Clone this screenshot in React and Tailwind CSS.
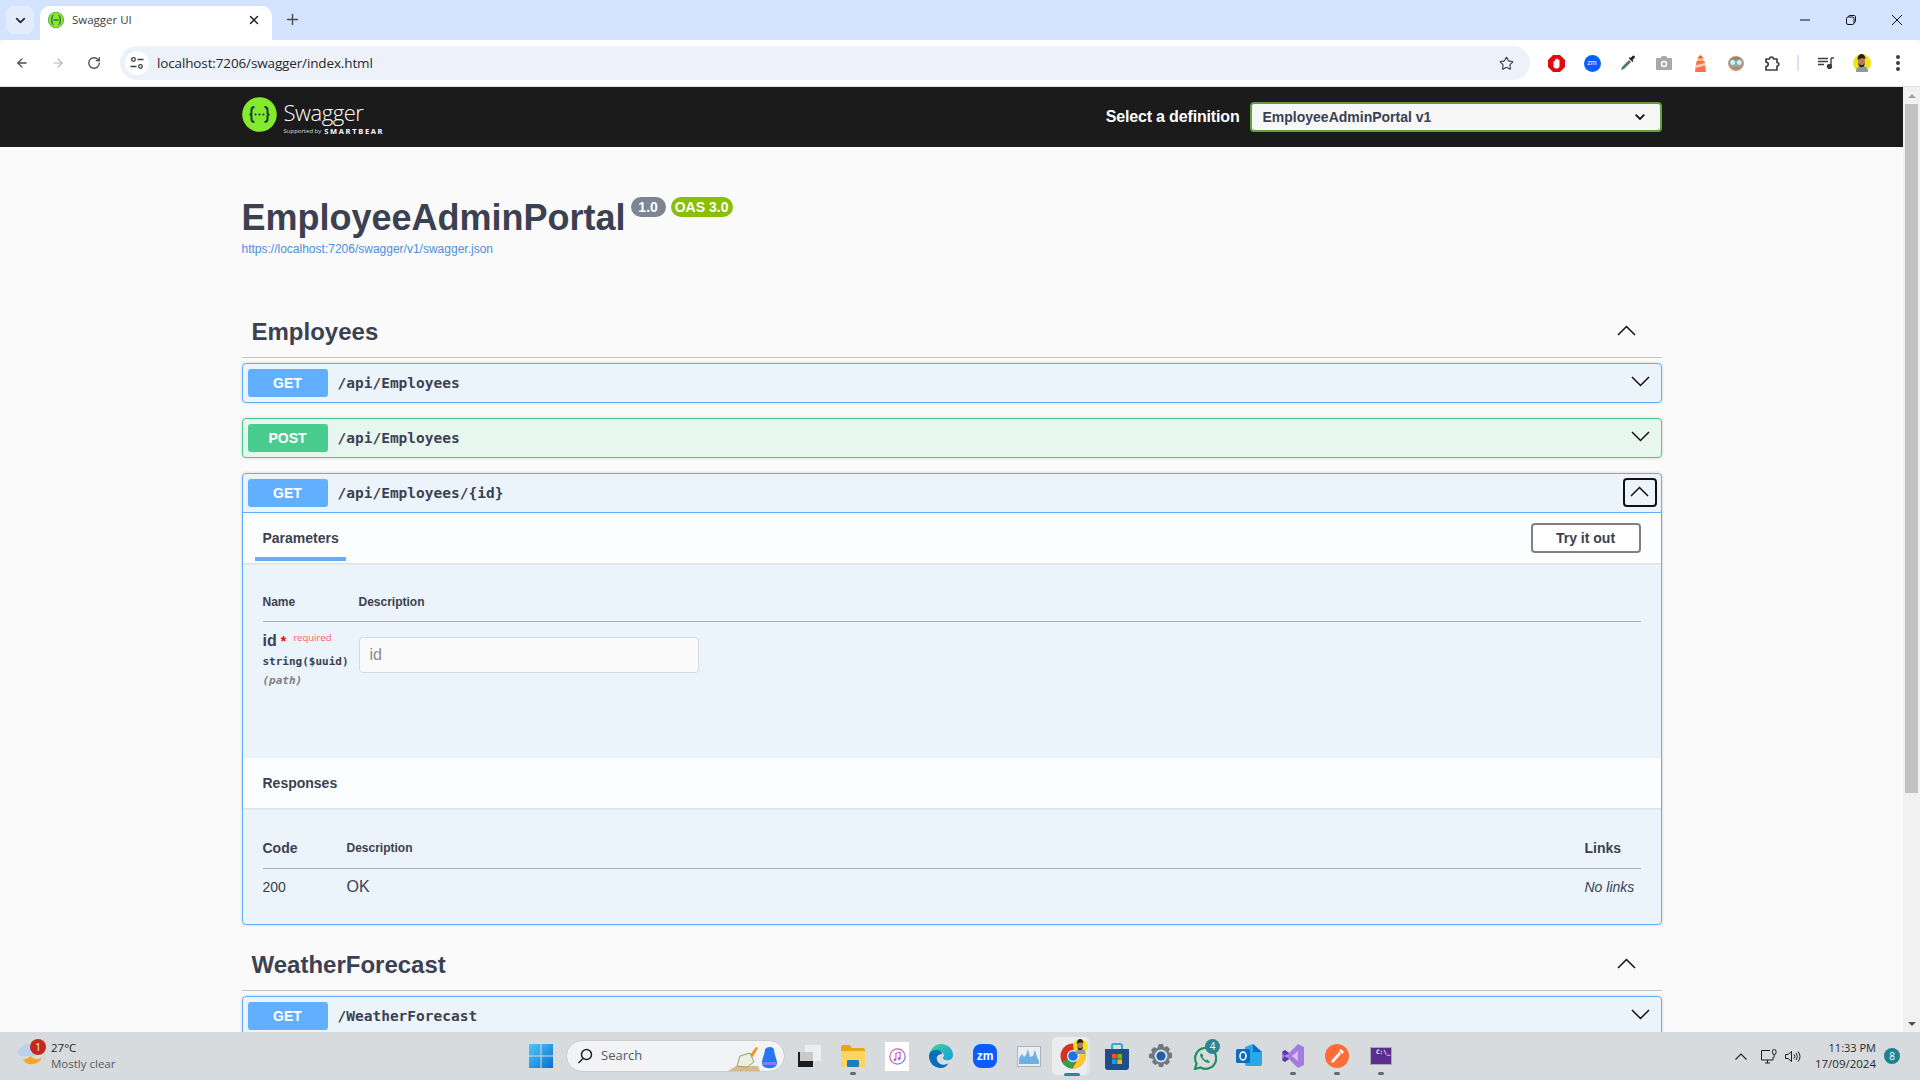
import React from "react";
import { ArrowLeft, ArrowRight, RotateCw, Star, X, Plus, ChevronDown } from "lucide-react";

const Chev = ({ up, className = "" }) => (
  <svg width="19" height="11" viewBox="0 0 19 11" className={className} fill="none" stroke="#111" strokeWidth="1.5">
    <path d={up ? "M1 10 L9.5 1.5 L18 10" : "M1 1 L9.5 9.5 L18 1"} />
  </svg>
);

const Method = ({ m, color }) => (
  <span className={`w-[80px] h-[28px] rounded-[3px] text-white font-bold text-[14px] flex items-center justify-center shrink-0 ${color}`}>{m}</span>
);

const Path = ({ children }) => (
  <span className="ml-[10px] mt-[2px] text-[14.5px] font-bold text-[#3b4151] font-['DejaVu_Sans_Mono',monospace]">{children}</span>
);

const Row = ({ m, path, post, className = "" }) => (
  <div className={`h-[40px] rounded-[4px] border flex items-center pl-[5px] pr-[11px] shadow-[0_0_3px_rgba(0,0,0,0.19)] ${post ? "bg-[#e8f6f0] border-[#49cc90]" : "bg-[#ebf3fb] border-[#61affe]"} ${className}`}>
    <Method m={m} color={post ? "bg-[#49cc90]" : "bg-[#61affe]"} />
    <Path>{path}</Path>
    <Chev className="ml-auto mb-[3px]" />
  </div>
);

const TagHead = ({ name }) => (
  <div className="h-[51px] border-b border-[#c4c4c4] flex items-center pl-[10px] pr-[26px]">
    <h3 className="text-[24px] font-bold text-[#3b4151]">{name}</h3>
    <Chev up className="ml-auto mb-[3px]" />
  </div>
);

const Swag = ({ size = 35, className = "" }) => (
  <svg width={size} height={size} viewBox="0 0 35 35" className={`shrink-0 ${className}`}>
    <circle cx="17.5" cy="17.5" r="17.3" fill="#85ea2d" />
    <path d="M12.5 10c-2.5 0-3 1-3 3v3c0 1-.7 1.5-2 1.5 1.3 0 2 .5 2 1.5v3c0 2 .5 3 3 3M22.500 10c2.500 0 3 1 3 3v3c0 1 .7 1.500 2 1.500-1.300 0-2 .5-2 1.500v3c0 2-.5 3-3 3" fill="none" stroke="#173647" strokeWidth="2" />
    <circle cx="13.500" cy="17.500" r="1.100" fill="#173647" />
    <circle cx="17.500" cy="17.500" r="1.100" fill="#173647" />
    <circle cx="21.500" cy="17.500" r="1.100" fill="#173647" />
  </svg>
);

const Avatar = ({ size = 18 }) => (
  <svg width={size} height={size} viewBox="0 0 18 18" className="shrink-0">
    <circle cx="9" cy="9" r="9" fill="#f2e21a" />
    <path d="M3 18c0-5 3-6 6-6s6 1 6 6z" fill="#8d98a3" />
    <ellipse cx="8.500" cy="7.500" rx="3.500" ry="4.500" fill="#b67c55" />
    <path d="M4.500 6c0-4 2-6 4-6s4 2 4 5c-2-1-5-1-8 1zM5.500 9c1 3 5 3 6 0v2c-1 3-5 3-6 0z" fill="#23211f" />
  </svg>
);

const Ext = ({ children }) => <div className="w-[36px] flex items-center justify-center">{children}</div>;

const Dot = () => <span className="absolute bottom-[5px] left-1/2 -translate-x-1/2 w-[6px] h-[3px] rounded-full bg-[#666b70]" />;

const App24 = ({ children, dot }) => (
  <div className="relative w-[44px] h-[48px] flex items-center justify-center shrink-0">
    {children}
    {dot && <Dot />}
  </div>
);

export default function App() {
  return (
    <div className="w-[1920px] h-[1080px] flex flex-col overflow-hidden font-['Liberation_Sans',Arial,sans-serif] bg-[#fafafa]">
      {/* tab strip */}
      <div className="h-[40px] shrink-0 bg-[#d3e3fd] flex items-end relative">
        <div className="absolute left-[6px] top-[6px] w-[28px] h-[28px] rounded-[8px] bg-[#e3ecfb] flex items-center justify-center">
          <ChevronDown size={15} strokeWidth={3} color="#2a2f36" />
        </div>
        <div className="ml-[40px] w-[232px] h-[34px] bg-white rounded-t-[10px] flex items-center pl-[8px] pr-[9px] pb-[6px]">
          <svg width="16" height="16" viewBox="0 0 16 16" className="shrink-0">
            <circle cx="8" cy="8" r="7.700" fill="#85ea2d" stroke="#2f7a3a" strokeWidth="0.6" />
            <path d="M5.500 3.500C4 3.500 4 5 4 6.500S3.500 8 3 8c.5 0 1 .5 1 1.500s0 3 1.500 3M10.500 3.500c1.500 0 1.500 1.500 1.500 3s.5 1.500 1 1.500c-.5 0-1 .5-1 1.500s0 3-1.500 3M5.500 8h5" fill="none" stroke="#173647" strokeWidth="1" />
          </svg>
          <span className="ml-[8px] text-[11.500px] text-[#3c4043] font-['Open_Sans',sans-serif]">Swagger UI</span>
          <X size={14} strokeWidth={2.5} color="#202124" className="ml-auto mr-[2px]" />
        </div>
        <Plus size={17} strokeWidth={2} color="#45494f" className="ml-[12px] mb-[12px]" />
        <div className="ml-auto flex items-center mb-[15px] pr-[18px] gap-[36px]">
          <svg width="10" height="10" viewBox="0 0 10 10"><path d="M0 5h10" stroke="#111" strokeWidth="1" /></svg>
          <svg width="10" height="10" viewBox="0 0 10 10" fill="none" stroke="#111" strokeWidth="1"><rect x="0.500" y="2" width="7.500" height="7.500" rx="1.500" /><path d="M2.500 2V1.500C2.500 1 3 .5 3.500 .5h4.500C9 .5 9.500 1 9.500 2v4.500C9.500 7 9 7.500 8 7.500" /></svg>
          <svg width="10" height="10" viewBox="0 0 10 10"><path d="M0 0l10 10M10 0L0 10" stroke="#111" strokeWidth="1" /></svg>
        </div>
      </div>

      {/* toolbar */}
      <div className="h-[47px] shrink-0 bg-white border-b border-[#e3e3e3] flex items-center rounded-t-[10px]">
        <div className="w-[120px] pl-[15px] flex items-center gap-[22px] shrink-0">
          <ArrowLeft size={14} strokeWidth={2.2} color="#474b50" className="w-[14px]" />
          <ArrowRight size={14} strokeWidth={2} color="#b0b2b5" />
          <RotateCw size={14} strokeWidth={2.2} color="#474b50" />
        </div>
        <div className="w-[1410px] h-[34px] bg-[#edf2fa] rounded-full flex items-center pl-[5px] pr-[16px] shrink-0">
          <div className="w-[24px] h-[24px] rounded-full bg-white flex items-center justify-center">
            <svg width="14" height="14" viewBox="0 0 14 14" fill="none" stroke="#3c4043" strokeWidth="1.300">
              <circle cx="3.500" cy="3.500" r="1.800" /><path d="M7.500 3.500h6M0.500 10.500h6" /><circle cx="10.500" cy="10.500" r="1.800" />
            </svg>
          </div>
          <span className="ml-[8px] text-[13.5px] text-[#25282c] font-['Open_Sans',sans-serif] tracking-[-0.01em]">localhost:7206/swagger/index.html</span>
          <Star size={15} strokeWidth={1.8} color="#3c4043" className="ml-auto" />
        </div>
        <div className="ml-[8px] flex items-center">
          <Ext>
            <svg width="17" height="17" viewBox="0 0 17 17"><path d="M5 0h7l5 5v7l-5 5H5l-5-5V5z" fill="#e5090f" /><path d="M5.500 11V6.500a.8.800 0 0 1 1.500 0V4.500a.8.800 0 0 1 1.500 0V4a.8.800 0 0 1 1.500 0v1a.8.800 0 0 1 1.500 0v6c0 1.500-1 2.500-2.500 2.500H8C6.500 13.500 5.500 12.500 5.500 11z" fill="#fff" /></svg>
          </Ext>
          <Ext>
            <div className="w-[17px] h-[17px] rounded-full bg-[#0b5cff] text-white text-[7px] flex items-center justify-center">zm</div>
          </Ext>
          <Ext>
            <svg width="16" height="16" viewBox="0 0 16 16"><path d="M1 15l1-3 7-7 2 2-7 7z" fill="#4e7d58" /><path d="M9 3.500l3.500 3.500 1-1-1-1 2-2a1.400 1.400 0 0 0-2-2l-2 2-1-1z" fill="#202124" /></svg>
          </Ext>
          <Ext>
            <svg width="16" height="14" viewBox="0 0 16 14"><path d="M1 2h3.500L6 0h4l1.500 2H15a1 1 0 0 1 1 1v10a1 1 0 0 1-1 1H1a1 1 0 0 1-1-1V3a1 1 0 0 1 1-1z" fill="#a8a8a8" /><circle cx="8" cy="8" r="3.200" fill="#fff" /><circle cx="8" cy="8" r="1.800" fill="#a8a8a8" /></svg>
          </Ext>
          <Ext>
            <svg width="13" height="17" viewBox="0 0 13 17"><path d="M6.500 0l3 3h-6z" fill="#f4511e" /><rect x="3.500" y="3" width="6" height="3" fill="#ffab91" /><path d="M2.500 6h8L12 17H1z" fill="#ff7043" /><path d="M2 10l9-2 .4 2.500L1.600 13z" fill="#ffccbc" /></svg>
          </Ext>
          <Ext>
            <svg width="16" height="15" viewBox="0 0 16 15"><ellipse cx="8" cy="7.500" rx="8" ry="7.500" fill="#c49a76" /><path d="M2 4c2-4 10-4 12 0z" fill="#9d7f5e" /><circle cx="4.800" cy="6.500" r="3" fill="#d9eef2" stroke="#6ea6b0" /><circle cx="11.200" cy="6.500" r="3" fill="#d9eef2" stroke="#6ea6b0" /><path d="M5 12h6" stroke="#8a8f92" strokeWidth="2" /></svg>
          </Ext>
          <Ext>
            <svg width="17" height="17" viewBox="0 0 17 17" fill="none" stroke="#3c4043" strokeWidth="1.700" strokeLinejoin="round"><path d="M2 4h3.500a2 2 0 0 1 4 0H13v3.500a1.800 1.800 0 0 1 0 3.600V15H2v-3.500a2.200 2.200 0 0 0 0-4.400z" /></svg>
          </Ext>
          <div className="w-[2px] h-[16px] bg-[#d3e3fd] ml-[7px] mr-[17px]" />
          <div className="w-[20px] flex justify-center">
            <svg width="16" height="12" viewBox="0 0 16 12" fill="none" stroke="#3c4043" strokeWidth="1.400"><path d="M0 1.500h10M0 4.500h10M0 7.500h6" /><path d="M13 1v8" /><path d="M13 1h3" /><circle cx="11.500" cy="9.500" r="2" fill="#3c4043" /></svg>
          </div>
          <div className="w-[36px] ml-[8px] flex justify-center"><Avatar /></div>
          <div className="ml-[8px] w-[20px] flex flex-col items-center gap-[2.500px]">
            <span className="w-[3.500px] h-[3.500px] rounded-full bg-[#3c4043]" />
            <span className="w-[3.500px] h-[3.500px] rounded-full bg-[#3c4043]" />
            <span className="w-[3.500px] h-[3.500px] rounded-full bg-[#3c4043]" />
          </div>
        </div>
      </div>

      {/* viewport */}
      <div className="flex-1 min-h-0 flex overflow-hidden">
        <div className="flex-1 min-w-0 overflow-hidden">
          <div className="h-[60px] bg-[#1b1b1b]">
            <div className="w-[1420px] mx-auto h-full flex items-center">
              <Swag className="mb-[6px]" />
              <div className="ml-[7px] flex flex-col text-white font-['Open_Sans',sans-serif] mt-[1px]">
                <span className="text-[22px] leading-[26px] font-light tracking-[-0.02em]">Swagger</span>
                <div className="flex items-center h-[9px] mt-[2px]">
                  <span className="text-[6px] leading-[9px] whitespace-nowrap text-[#dcdcdc]">Supported by</span>
                  <span className="ml-[3px] text-[7.500px] leading-[9px] font-bold tracking-[0.22em]">SMARTBEAR</span>
                </div>
              </div>
              <span className="ml-auto text-white text-[16px] font-bold tracking-[-0.01em]">Select a definition</span>
              <div className="ml-[10px] w-[412px] h-[30px] rounded-[4px] border-2 border-[#62a03f] bg-[#f7f7f7] flex items-center pl-[11px] pr-[15px] text-[14px] font-bold text-[#3b4151]">
                EmployeeAdminPortal v1
                <svg width="10" height="6" viewBox="0 0 10 6" className="ml-auto" fill="none" stroke="#111" strokeWidth="1.800"><path d="M.7.700L5 5l4.300-4.300" /></svg>
              </div>
            </div>
          </div>

          <div className="w-[1420px] mx-auto">
            <div className="pt-[50px] flex items-start h-[94px]">
              <h2 className="mt-[1px] text-[36px] leading-[40px] font-bold text-[#3b4151]">EmployeeAdminPortal</h2>
              <span className="ml-[5px] h-[20px] w-[35px] rounded-[10px] bg-[#7d8492] text-white text-[14px] font-bold flex items-center justify-center">1.0</span>
              <span className="ml-[5px] h-[20px] w-[62px] rounded-[10px] bg-[#89bf04] text-white text-[14px] font-bold flex items-center justify-center whitespace-nowrap">OAS 3.0</span>
            </div>
            <div className="mt-[1px] h-[14px] text-[12px] leading-[14px] text-[#4990e2]">https://localhost:7206/swagger/v1/swagger.json</div>
            <div className="mt-[51px]"><TagHead name="Employees" /></div>
            <Row m="GET" path="/api/Employees" className="mt-[5px]" />
            <Row m="POST" path="/api/Employees" post className="mt-[15px]" />

            <div className="mt-[15px] rounded-[4px] border border-[#61affe] bg-[#ebf3fb] shadow-[0_0_3px_rgba(0,0,0,0.19)]">
              <div className="h-[39px] border-b border-[#61affe] flex items-center pl-[5px] pr-[4px]">
                <Method m="GET" color="bg-[#61affe]" />
                <Path>/api/Employees/{"{id}"}</Path>
                <div className="ml-auto w-[34px] h-[29px] -mt-[1px] rounded-[4px] border-2 border-[#111] flex items-center justify-center">
                  <Chev up className="mb-[3px]" />
                </div>
              </div>

              <div className="h-[50px] bg-[#fcfdfe] shadow-[0_1px_2px_rgba(0,0,0,0.1)] flex items-center pl-[12px] pr-[20px]">
                <div className="self-start w-[91px] h-[48px] border-b-4 border-[#61affe] pl-[8px] pt-[15px] text-[14px] leading-[20px] font-bold text-[#3b4151]">Parameters</div>
                <button className="ml-auto w-[110px] h-[30px] rounded-[4px] border-2 border-[#808080] bg-white text-[14px] font-bold text-[#3b4151]">Try it out</button>
              </div>

              <div className="h-[195px] px-[20px] pt-[29px]">
                <div className="h-[30px] border-b border-[#a7acb5] flex text-[12px] leading-[20px] font-bold text-[#3b4151]">
                  <div className="w-[96px]">Name</div>
                  <div>Description</div>
                </div>
                <div className="flex">
                  <div className="w-[96px] pt-[9px]">
                    <div className="h-[20px] flex items-center">
                      <span className="text-[16px] font-bold text-[#3b4151]">id</span>
                      <span className="ml-[4px] text-[#ff0000] text-[14px] font-bold">*</span>
                      <span className="ml-[7px] -mt-[6px] text-[9.500px] text-[#ff6060] font-['Open_Sans',sans-serif]">required</span>
                    </div>
                    <div className="mt-[1px] h-[20px] leading-[20px] text-[11px] font-['DejaVu_Sans_Mono',monospace] font-bold text-[#3b4151] whitespace-nowrap">string($uuid)</div>
                    <div className="h-[18px] leading-[18px] text-[11px] italic font-['DejaVu_Sans_Mono',monospace] font-bold text-[#808080]">(path)</div>
                  </div>
                  <div className="pt-[15px]">
                    <input readOnly placeholder="id" className="block w-[340px] h-[36px] rounded-[4px] border border-[#d9d9d9] bg-[#fafafa] pl-[10px] text-[16px] text-[#3b4151] placeholder:text-[#8a8a8a] outline-none" />
                  </div>
                </div>
              </div>

              <div className="h-[50px] bg-[#fcfdfe] shadow-[0_1px_2px_rgba(0,0,0,0.1)] flex items-center pl-[20px] text-[14px] font-bold text-[#3b4151]">Responses</div>

              <div className="h-[116px] px-[20px] pt-[30px]">
                <div className="h-[31px] border-b border-[#a7acb5] flex text-[#3b4151] leading-[20px]">
                  <div className="w-[84px] text-[14px] font-bold">Code</div>
                  <div className="text-[12px] font-bold">Description</div>
                  <div className="ml-auto w-[56px] text-[14px] font-bold">Links</div>
                </div>
                <div className="flex pt-[8px] text-[#3b4151] leading-[20px]">
                  <div className="w-[84px] text-[14px]">200</div>
                  <div className="text-[16px]">OK</div>
                  <div className="ml-auto w-[56px] text-[14px] italic">No links</div>
                </div>
              </div>
            </div>

            <div className="mt-[15px]"><TagHead name="WeatherForecast" /></div>
            <Row m="GET" path="/WeatherForecast" className="mt-[5px]" />
          </div>
        </div>

        {/* scrollbar */}
        <div className="w-[17px] shrink-0 bg-[#f1f1f1] flex flex-col items-center">
          <div className="h-[17px] flex items-center justify-center"><div className="w-0 h-0 border-x-[4px] border-x-transparent border-b-[4px] border-b-[#a3a3a3]" /></div>
          <div className="w-[13px] h-[689px] bg-[#c1c1c1]" />
          <div className="mt-auto h-[17px] flex items-center justify-center"><div className="w-0 h-0 border-x-[4px] border-x-transparent border-t-[4px] border-t-[#505050]" /></div>
        </div>
      </div>

      {/* taskbar */}
      <div className="h-[48px] shrink-0 bg-[#d8dbde] flex items-center">
        <div className="w-[529px] shrink-0 flex items-center pl-[18px]">
          <div className="relative w-[30px] h-[34px] shrink-0">
            <svg width="26" height="30" viewBox="0 0 26 30" className="absolute left-0 top-[3px]">
              <path d="M5 18a11 11 0 0 0 19-3c-2 3-9 3-11-1 0 0-4 3-8 4z" fill="#f6a623" />
              <path d="M2 14a5 5 0 0 1 2-9 6 6 0 0 1 11 2 3.500 3.500 0 0 1 0 7z" fill="#bcd2ec" />
            </svg>
            <span className="absolute left-[12px] top-0 w-[16px] h-[16px] rounded-full bg-[#c4281c] text-white text-[10px] leading-[16px] text-center font-['Open_Sans',sans-serif]">1</span>
          </div>
          <div className="ml-[3px] text-[11.500px] leading-[16px] font-['Open_Sans',sans-serif]">
            <div className="text-[#1f1f1f]">27°C</div>
            <div className="text-[#555a5f]">Mostly clear</div>
          </div>
        </div>

        <svg width="24" height="24" viewBox="0 0 24 24" className="shrink-0">
          <defs><linearGradient id="win" x1="0" y1="0" x2="1" y2="1"><stop offset="0" stopColor="#4fc8f8" /><stop offset="1" stopColor="#0a6fd1" /></linearGradient></defs>
          <path d="M0 0h11.500v11.500H0zM12.500 0H24v11.500H12.500zM0 12.500h11.500V24H0zM12.500 12.500H24V24H12.500z" fill="url(#win)" />
        </svg>

        <div className="ml-[13px] w-[219px] h-[32px] rounded-full bg-[#f1f3f5] border border-[#c9ccd0] flex items-center pl-[10px] shrink-0 relative">
          <svg width="16" height="16" viewBox="0 0 16 16" fill="none" stroke="#1f1f1f" strokeWidth="1.500"><circle cx="9.500" cy="6.500" r="5" /><path d="M6 10.500L1.500 15" /></svg>
          <span className="ml-[8px] text-[13px] text-[#55595e] font-['Open_Sans',sans-serif]">Search</span>
          <svg width="50" height="27" viewBox="0 0 50 27" className="absolute right-[6px] top-[3px]">
            <path d="M0 27l8-5h22l2 5z" fill="#d8b98a" />
            <path d="M9 22l3-10 10-3 4 9-7 5z" fill="#eef0df" stroke="#89a57a" />
            <path d="M22 11l6-8 2 1-5 9z" fill="#f39323" />
            <path d="M35 22a5 5 0 0 1-1-3c0-5 2-6 3-13 0-2 3-3 5-3 2 0 4 1 4 3 1 7 3 9 3 13a5 5 0 0 1-1 3c-3 3-10 3-13 0z" fill="#2876f0" />
            <path d="M35 18h13v3H35z" fill="#8a7bf0" />
          </svg>
        </div>

        <div className="flex ml-[2px] items-center">
          <App24>
            <div className="relative w-[23px] h-[22px]">
              <div className="absolute left-[7px] top-0 w-[16px] h-[16px] bg-[#eceeef]" />
              <div className="absolute left-0 top-[7px] w-[15px] h-[15px] bg-[#1c1c1c]" />
              <div className="absolute left-[2px] top-[7px] w-[13px] h-[9px] bg-[#c9c9c9]" />
            </div>
          </App24>
          <App24 dot>
            <svg width="24" height="22" viewBox="0 0 24 22"><path d="M0 2a2 2 0 0 1 2-2h7l2 3h11a2 2 0 0 1 2 2v15a2 2 0 0 1-2 2H2a2 2 0 0 1-2-2z" fill="#e8a817" /><path d="M0 6h24v14a2 2 0 0 1-2 2H2a2 2 0 0 1-2-2z" fill="#fcd560" /><rect x="6" y="15" width="12" height="7" rx="1" fill="#1c7ec2" /></svg>
          </App24>
          <App24>
            <div className="w-[24px] h-[29px] bg-white flex items-center justify-center">
              <svg width="17" height="17" viewBox="0 0 16 16" fill="none"><defs><linearGradient id="itn" x1="0" y1="0" x2="1" y2="1"><stop offset="0" stopColor="#fa5c7c" /><stop offset="1" stopColor="#5a8cf0" /></linearGradient></defs><circle cx="8" cy="8" r="7.200" stroke="url(#itn)" strokeWidth="1.200" /><path d="M6.500 11V5l4-1v6" stroke="#c04fd0" strokeWidth="1" /><circle cx="5.500" cy="11" r="1.200" fill="#c04fd0" /><circle cx="9.500" cy="10" r="1.200" fill="#c04fd0" /></svg>
            </div>
          </App24>
          <App24>
            <svg width="24" height="24" viewBox="0 0 24 24"><defs><linearGradient id="edg" x1="0" y1="0" x2="1" y2="1"><stop offset="0" stopColor="#38d39a" /><stop offset="1" stopColor="#1b9de2" /></linearGradient></defs><path d="M12 0c7 0 12 5 12 11 0 5-5 6-8 5-3-1-2-3-1-4 0-3-3-5-6-5-5 0-9 4-9 5C1 5 6 0 12 0z" fill="url(#edg)" /><path d="M0 12c0-4 4-6 8-6 3 0 5 2 5 4-4 0-6 3-5 6 1 4 6 6 10 4 1 0 2-1 2-1-2 3-5 5-8 5-7 0-12-5-12-12z" fill="#0c6cb8" /></svg>
          </App24>
          <App24>
            <div className="w-[24px] h-[24px] rounded-[8px] bg-[#0b5cff] text-white text-[12px] font-bold flex items-center justify-center">zm</div>
          </App24>
          <App24>
            <svg width="24" height="21" viewBox="0 0 24 21"><rect x="0.500" y="0.500" width="23" height="20" fill="#e9eef3" stroke="#a9b4bf" /><path d="M2 18V12l3-4 2 3 2-2 2-6 2 8 3-1 2-6 2 7 2 4v3z" fill="#6eb1e0" /></svg>
          </App24>
          <App24>
            <div className="absolute left-[1px] top-[5px] w-[38px] h-[38px] bg-[#eaeced] rounded-[5px] border-r-[3px] border-[#e2e4e6]" />
            <svg width="26" height="26" viewBox="0 0 26 26" className="relative">
              <circle cx="13" cy="13" r="12.500" fill="#d93025" />
              <path d="M13 13L2 19a12.500 12.500 0 0 0 10 6.500L19 13z" fill="#31a24c" />
              <path d="M13 7.500h11.500a12.500 12.500 0 0 1-12 18L18 16z" fill="#fcc934" />
              <circle cx="13" cy="13" r="6" fill="#fff" />
              <circle cx="13" cy="13" r="4.800" fill="#1a73e8" />
            </svg>
            <div className="absolute left-[22px] top-[7px]"><Avatar size={15} /></div>
            <span className="absolute bottom-[4px] left-[13px] w-[16px] h-[3px] rounded-full bg-[#2a8a96]" />
          </App24>
          <App24>
            <svg width="24" height="27" viewBox="0 0 24 27"><path d="M7 7V3a2 2 0 0 1 2-2h6a2 2 0 0 1 2 2v4" fill="none" stroke="#2fa8d8" strokeWidth="2" /><path d="M0 6h24v18a3 3 0 0 1-3 3H3a3 3 0 0 1-3-3z" fill="#1f4f86" /><rect x="7" y="11" width="4.600" height="4.600" fill="#f25022" /><rect x="12.400" y="11" width="4.600" height="4.600" fill="#7fba00" /><rect x="7" y="16.400" width="4.600" height="4.600" fill="#00a4ef" /><rect x="12.400" y="16.400" width="4.600" height="4.600" fill="#ffb900" /></svg>
          </App24>
          <App24>
            <svg width="24" height="24" viewBox="0 0 24 24"><path d="M10 0h4l1 3.500 3-1.500 3 3-1.500 3 3.500 1v5l-3.500 1 1.500 3-3 3-3-1.500-1 3.500h-4l-1-3.500-3 1.500-3-3 1.500-3L0 14V10l3.500-1L2 6l3-3 3 1.500z" fill="#6d7780" /><circle cx="12" cy="12" r="6.500" fill="#d8dbde" /><circle cx="12" cy="12" r="4.500" fill="#1d5fa8" /></svg>
          </App24>
          <App24>
            <svg width="24" height="24" viewBox="0 0 24 24" fill="none" className="mt-[3px]"><path d="M2 23l1.500-5.500A10.500 10.500 0 1 1 7.500 21.500z" stroke="#21905c" strokeWidth="2.200" /><path d="M8 7c-2 2 0 5 2 7s5 4 7 2l-2.500-2.500-1.500 1c-1.500-.7-3-2.500-3.500-3.500l1-1.500z" fill="#21905c" /></svg>
            <span className="absolute left-[22px] top-[7px] w-[15px] h-[15px] rounded-full bg-[#2b8593] text-white text-[10px] leading-[15px] text-center font-['Open_Sans',sans-serif]">4</span>
          </App24>
          <App24>
            <svg width="26" height="24" viewBox="0 0 26 24"><path d="M9 3l8-3 9 8v12a2 2 0 0 1-2 2H11a2 2 0 0 1-2-2z" fill="#28a8ea" /><path d="M17 0l9 8h-9z" fill="#0f6cbd" /><rect x="0" y="5" width="14" height="14" rx="1.500" fill="#0f6cbd" /><ellipse cx="7" cy="12" rx="3" ry="4" fill="none" stroke="#fff" strokeWidth="1.600" /></svg>
          </App24>
          <App24 dot>
            <svg width="22" height="24" viewBox="0 0 22 24"><path d="M16 0l6 3v18l-6 3-9-9-4 3-3-2V8l3-2 4 3z" fill="#a47ce0" /><path d="M16 7v10l-6-5z" fill="#d6c1f4" /><path d="M3 9.500v5l2.500-2.500z" fill="#d6c1f4" /><path d="M0 8l3-2 4 3-4 3zM0 16l3 2 4-3-4-3z" fill="#5d3aa8" /></svg>
          </App24>
          <App24 dot>
            <svg width="24" height="24" viewBox="0 0 24 24"><circle cx="12" cy="12" r="12" fill="#ff6c37" /><path d="M6 19l1-3 7-8 2 2-7 8zM14 7l2-2 3 3-2 2z" fill="#fff" /></svg>
          </App24>
          <App24 dot>
            <div className="w-[22px] h-[18px] bg-[#5c2d91] border border-[#a8a8ad] pl-[5px] text-[6px] leading-[8px] text-white font-['DejaVu_Sans_Mono',monospace] font-bold">C:\_</div>
          </App24>
        </div>

        <div className="ml-auto flex items-center pr-[20px]">
          <svg width="12" height="7" viewBox="0 0 12 7" fill="none" stroke="#1f1f1f" strokeWidth="1.100"><path d="M.5 6.500L6 1l5.500 5.500" /></svg>
          <svg width="16" height="15" viewBox="0 0 16 15" className="ml-[14px]" fill="none" stroke="#1f1f1f" strokeWidth="1"><path d="M9 1.500H.5v9.500H12V8" /><path d="M4 14h5M6.500 11v3" /><rect x="11.500" y=".5" width="3.500" height="5" rx="1.700" /><path d="M13.200 5.500v3" /></svg>
          <svg width="16" height="13" viewBox="0 0 16 13" className="ml-[8px]" fill="none" stroke="#1f1f1f" strokeWidth="1"><path d="M.5 4.500h2.500L6.500 1.500v10L3 8.500H.5z" /><path d="M9 4.500a3 3 0 0 1 0 4M11 3a5.500 5.500 0 0 1 0 7M13 1.500a8 8 0 0 1 0 10" /></svg>
          <div className="ml-[9px] w-[66px] text-right text-[11.500px] leading-[16px] text-[#2a2a2a] font-['Open_Sans',sans-serif]">
            <div className="text-[11px]">11:33 PM</div>
            <div className="whitespace-nowrap">17/09/2024</div>
          </div>
          <span className="ml-[8px] w-[16px] h-[16px] rounded-full bg-[#1f8291] text-white text-[10px] leading-[16px] text-center font-['Open_Sans',sans-serif]">8</span>
        </div>
      </div>
    </div>
  );
}
